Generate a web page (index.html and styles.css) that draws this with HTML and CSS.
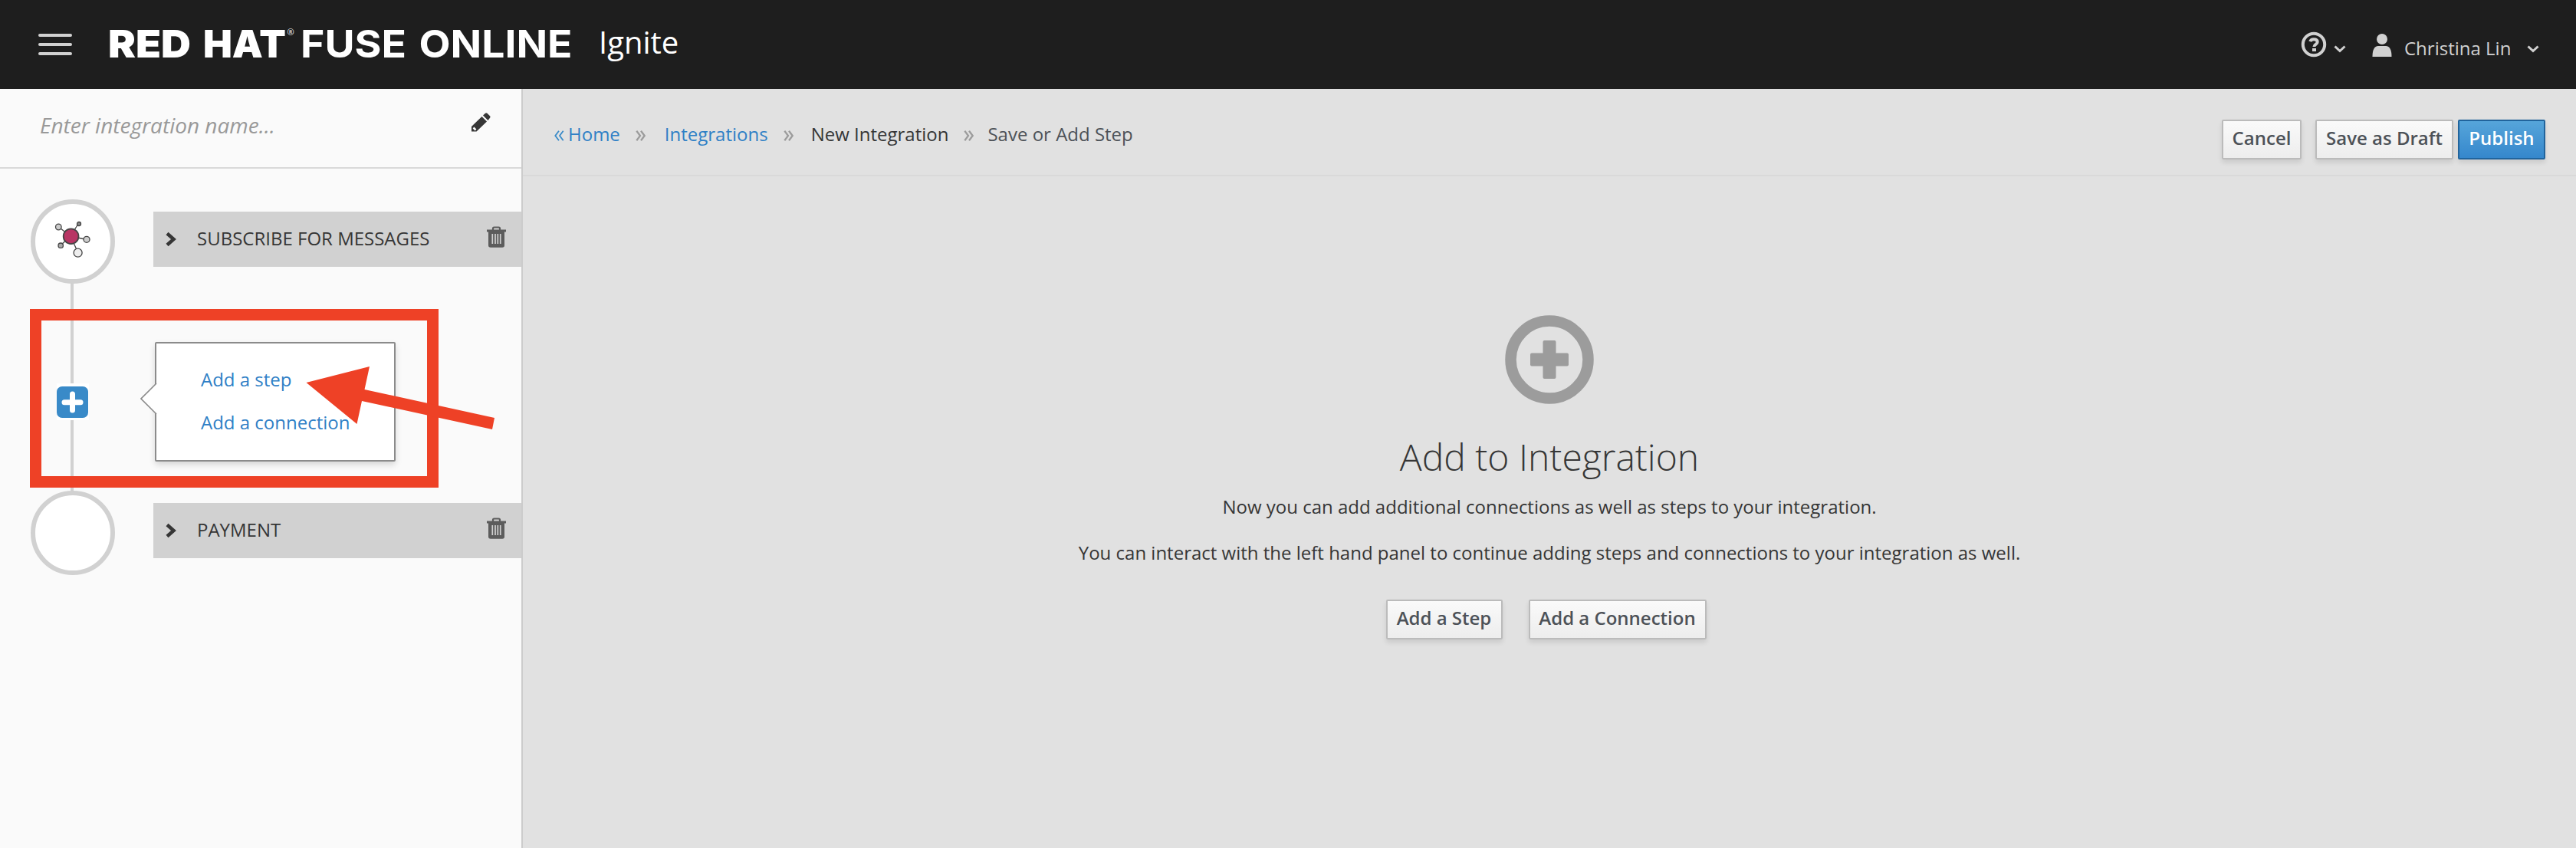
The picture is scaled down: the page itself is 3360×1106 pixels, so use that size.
FILE: index.html
```html
<!DOCTYPE html>
<html lang="en">
<head>
<meta charset="utf-8">
<title>Fuse Online - Ignite</title>
<link rel="stylesheet" href="styles.css">
</head>
<body>
<header class="masthead">
  <button class="menu" aria-label="Menu"><span></span><span></span><span></span></button>
  <svg class="brand" width="608" height="76" viewBox="0 -20 608 76">
    <text class="brand-red" x="-3" y="39" textLength="108" lengthAdjust="spacingAndGlyphs">RED</text>
    <text class="brand-red" x="121" y="39" textLength="108" lengthAdjust="spacingAndGlyphs">HAT</text>
    <text class="brand-reg" x="230.500" y="10">®</text>
    <text class="brand-fuse" x="248" y="39" textLength="138" lengthAdjust="spacingAndGlyphs">FUSE</text>
    <text class="brand-fuse" x="402.500" y="39" textLength="200" lengthAdjust="spacingAndGlyphs">ONLINE</text>
  </svg>
  <span class="app">Ignite</span>
  <nav class="utility">
    <svg class="help" width="34" height="34" viewBox="0 0 34 34"><circle cx="17" cy="17" r="14.2" fill="none" stroke="#d1d1d1" stroke-width="4"/><path d="M12.2 13.2c.8-2.300 2.500-3 4.800-3 3 0 4.700 1.500 4.700 3.500 0 3.300-4.300 3-4.300 6.200" fill="none" stroke="#d1d1d1" stroke-width="4"/><path d="M15 22h5v4h-5z" fill="#d1d1d1"/></svg>
    <svg class="caret c1" width="16" height="10" viewBox="0 0 16 10"><path d="M1.500 1.500 8 7.500l6.500-6" fill="none" stroke="#d1d1d1" stroke-width="3"/></svg>
    <svg class="user" width="26" height="32" viewBox="0 0 26 32"><circle cx="13" cy="8" r="7" fill="#d1d1d1"/><path d="M.5 31C.5 22 3 17 8 17h10c5 0 7.500 5 7.500 14z" fill="#d1d1d1"/></svg>
    <span class="username">Christina Lin</span>
    <svg class="caret c2" width="16" height="10" viewBox="0 0 16 10"><path d="M1.500 1.500 8 7.500l6.500-6" fill="none" stroke="#d1d1d1" stroke-width="3"/></svg>
  </nav>
</header>
<div class="page">
  <aside class="sidebar">
    <div class="name-row">
      <span class="name">Enter integration name...</span>
      <svg class="pencil" width="25" height="25" viewBox="0 0 25 25"><path d="M0 24.500V18L13.500 5l6.500 6.500L6.500 24.500z M15 3.500 18 .8q1.200-1 2.500 0L24 4.300q1 1.200 0 2.500L21.500 10z" fill="#363636"/><path d="M2.500 19.500 5.500 22.500" stroke="#fff" stroke-width="2.500"/></svg>
    </div>
    <div class="flow">
      <div class="step">
        <div class="node">
          <svg width="50" height="50" viewBox="0 0 50 50" stroke="#444" stroke-width="1.300"><path d="M8.500 8 24 20 34 4M24 20l21 4.500M24 20 11 32M24 20l10 22" fill="none"/><circle cx="8.300" cy="8" r="3.800" fill="#ccc"/><circle cx="35" cy="4" r="2.500" fill="#888"/><circle cx="45" cy="24.300" r="4" fill="#ccc"/><circle cx="11.200" cy="32.200" r="3.200" fill="#aaa"/><circle cx="33.600" cy="41.700" r="5.500" fill="#eee"/><circle cx="24.600" cy="20.200" r="9.900" fill="#b83564" stroke-width="1.800"/></svg>
        </div>
        <div class="bar">
          <svg class="chev" width="14" height="20" viewBox="0 0 14 20"><path d="m2 2.500 8.500 7.500L2 17.500" fill="none" stroke="#363636" stroke-width="4.500"/></svg>
          <span>SUBSCRIBE FOR MESSAGES</span>
          <svg class="trash" width="25" height="28" viewBox="0 0 25 28"><path d="M8 5V3q0-1.500 1.500-1.500h6Q17 1.500 17 3v2" fill="none" stroke="#5c5c5c" stroke-width="2.200"/><path d="M0 4.500h25v3h-2V25q0 2.800-2.800 2.800H5Q2 27.800 2 25V7.500H0z" fill="#5c5c5c"/><path d="M7.300 10v13M11 10v13M14.300 10v13M17.700 10v13" stroke="#d1d1d1" stroke-width="1.700"/></svg>
        </div>
      </div>
      <div class="insert">
        <span class="plus"><svg width="41" height="41" viewBox="0 0 41 41"><rect width="41" height="41" rx="7" fill="#398ac8"/><path d="M20.500 10v21M10 20.700h21" stroke="#fff" stroke-width="7" stroke-linecap="round"/></svg></span>
        <div class="popover">
          <svg class="tip" width="22" height="42" viewBox="0 0 22 42"><path d="M22 1H21L1 21l20 20h1z" fill="#fff"/><path d="M21 1 1 21l20 20" fill="none" stroke="#8b8b8b" stroke-width="1.600"/></svg>
          <a>Add a step</a>
          <a>Add a connection</a>
        </div>
      </div>
      <div class="step">
        <div class="node"></div>
        <div class="bar">
          <svg class="chev" width="14" height="20" viewBox="0 0 14 20"><path d="m2 2.500 8.500 7.500L2 17.500" fill="none" stroke="#363636" stroke-width="4.500"/></svg>
          <span>PAYMENT</span>
          <svg class="trash" width="25" height="28" viewBox="0 0 25 28"><path d="M8 5V3q0-1.500 1.500-1.500h6Q17 1.500 17 3v2" fill="none" stroke="#5c5c5c" stroke-width="2.200"/><path d="M0 4.500h25v3h-2V25q0 2.800-2.800 2.800H5Q2 27.800 2 25V7.500H0z" fill="#5c5c5c"/><path d="M7.300 10v13M11 10v13M14.300 10v13M17.700 10v13" stroke="#d1d1d1" stroke-width="1.700"/></svg>
        </div>
      </div>
    </div>
  </aside>
  <main class="main">
    <div class="toolbar">
      <nav class="crumbs">
        <a class="home"><svg width="13" height="14" viewBox="0 0 13 14"><path d="M6 .8 1.300 7 6 13.200M11.700.8 7 7l4.700 6.200" fill="none" stroke="#398ac8" stroke-width="1.800"/></svg>Home</a>
        <svg class="sep" width="13" height="14" viewBox="0 0 13 14"><path d="M1.300.8 6 7l-4.700 6.200M7 .8 11.700 7 7 13.200" fill="none" stroke="#9c9c9c" stroke-width="2.300"/></svg>
        <a class="list">Integrations</a>
        <svg class="sep" width="13" height="14" viewBox="0 0 13 14"><path d="M1.300.8 6 7l-4.700 6.200M7 .8 11.700 7 7 13.200" fill="none" stroke="#9c9c9c" stroke-width="2.300"/></svg>
        <span class="new">New Integration</span>
        <svg class="sep" width="13" height="14" viewBox="0 0 13 14"><path d="M1.300.8 6 7l-4.700 6.200M7 .8 11.700 7 7 13.200" fill="none" stroke="#9c9c9c" stroke-width="2.300"/></svg>
        <span class="current">Save or Add Step</span>
      </nav>
      <div class="actions">
        <button class="btn cancel">Cancel</button>
        <button class="btn draft">Save as Draft</button>
        <button class="btn primary">Publish</button>
      </div>
    </div>
    <section class="blank">
      <svg width="116" height="116" viewBox="0 0 116 116"><circle cx="58" cy="58" r="50.500" fill="none" stroke="#9c9c9c" stroke-width="14.500"/><rect x="33" y="49.500" width="50" height="17" rx="2" fill="#9c9c9c"/><rect x="49.500" y="33" width="17" height="50" rx="2" fill="#9c9c9c"/></svg>
      <h1>Add to Integration</h1>
      <p>Now you can add additional connections as well as steps to your integration.</p>
      <p>You can interact with the left hand panel to continue adding steps and connections to your integration as well.</p>
      <div class="choices">
        <button class="btn add-step">Add a Step</button>
        <button class="btn add-conn">Add a Connection</button>
      </div>
    </section>
  </main>
</div>
<svg class="callout" width="620" height="240" viewBox="38 400 620 240"><rect x="46.500" y="410.500" width="518" height="218" fill="none" stroke="#ee4126" stroke-width="15"/><path d="m399.500 499 82.500-21-6.500 30 169.500 37-3 15-170-37-6.500 30z" fill="#ee4126"/></svg>
</body>
</html>
```
FILE: styles.css
```css
* { box-sizing: border-box; }
body { margin: 0; width: 3360px; height: 1106px; overflow: hidden; position: relative; font-family: "Open Sans", sans-serif; font-size: 24px; color: #363636; background: #e1e1e1; white-space: nowrap; }
button { font-family: inherit; padding: 0; border: 0; background: none; }
svg { display: block; flex: none; }
.masthead { height: 116px; background: #1e1e1e; display: flex; align-items: flex-start; padding-left: 50px; }
.menu { display: flex; flex-direction: column; gap: 8px; width: 44px; margin-top: 44px; }
.menu span { height: 4px; border-radius: 2px; background: #d1d1d1; }
.brand { margin: 16px 0 0 50px; fill: #fff; overflow: visible; }
.brand-red { font: 900 49.5px Inter, sans-serif; }
.brand-fuse { font: 700 50px Inter, sans-serif; }
.brand-reg { font: 11px "Open Sans", sans-serif; }
.app { margin-left: 29px; margin-top: 28px; line-height: 54px; font-size: 40px; color: #fff; }
.utility { display: flex; align-items: flex-start; margin-left: auto; width: 359px; color: #d1d1d1; }
.help { margin-top: 41px; }
.c1 { margin: 59px 0 0 9px; }
.user { margin: 43px 0 0 34px; }
.username { margin: 46px 0 0 16px; width: 160px; line-height: 34px; }
.c2 { margin: 59px 0 0 0; }
.page { display: flex; height: 990px; }
.sidebar { width: 682px; border-right: 2px solid #ccc; background: #fafafa; }
.name-row { height: 104px; border-bottom: 2px solid #d9d9d9; display: flex; justify-content: space-between; padding: 31px 40px 0 52px; }
.name { font-style: italic; font-size: 28px; line-height: 32px; color: #999; }
.flow { padding-top: 40px; background: linear-gradient(#d1d1d1, #d1d1d1) 92px 140px / 4px 300px no-repeat; }
.step { height: 110px; display: flex; padding-left: 40px; }
.node { width: 110px; height: 110px; border: 6px solid #d1d1d1; border-radius: 50%; background: #fff; padding: 22px 0 0 22px; }
.bar { margin: 16px 0 0 50px; width: 480px; height: 72px; background: #d1d1d1; display: flex; align-items: center; padding: 0 20px 0 16px; }
.bar span { margin: 0 0 2px 27px; flex: 1; line-height: 34px; }
.bar .trash { margin-bottom: 7px; }
.insert { height: 270px; display: flex; align-items: flex-start; }
.plus { margin: 130px 0 0 74px; width: 42px; height: 48px; padding-top: 4px; background: #fff; }
.popover { position: relative; margin: 76px 0 0 86px; width: 314px; height: 156px; border: 2px solid #8b8b8b; border-radius: 2px; background: #fff; box-shadow: 0 4px 8px rgba(3,3,3,.15); padding: 30px 0 0 58px; display: flex; flex-direction: column; gap: 22px; }
.popover a { line-height: 34px; color: #2f80c6; }
.tip { position: absolute; left: -21px; top: 51px; }
.main { flex: 1; }
.toolbar { height: 114px; border-bottom: 2px solid #d9d9d9; display: flex; justify-content: space-between; padding: 40px 40px 0 41px; }
.crumbs { display: flex; height: 38px; line-height: 38px; }
.crumbs a { color: #2f80c6; }
.crumbs svg { margin-top: 13.5px; }
.crumbs .sep { margin-left: 20px; }
.home { display: flex; gap: 5px; }
.list { margin-left: 25px; }
.new { margin-left: 23px; }
.current { margin-left: 18px; color: #4d5258; }
.actions { display: flex; }
.btn { height: 52px; border: 2px solid #bbb; border-radius: 2px; background: linear-gradient(#fafafa, #ededed); box-shadow: 0 4px 6px rgba(3,3,3,.1); font-size: 24px; font-weight: 600; color: #4d5258; line-height: 42px; padding-bottom: 4px; text-align: center; }
.cancel { width: 104px; margin-right: 18px; }
.draft { width: 180px; margin-right: 6px; }
.primary { width: 114px; border-color: #21649c; background: linear-gradient(#56a5da, #3587cc); color: #fff; }
.blank { display: flex; flex-direction: column; align-items: center; padding-top: 181px; }
.blank h1 { margin: 41px 0 0; font-size: 48px; line-height: 56px; font-weight: 300; }
.blank p { margin: 14px 0 0; line-height: 46px; }
.choices { display: flex; gap: 34px; margin: 38px 9px 0 0; }
.add-step { width: 152px; }
.add-conn { width: 232px; }
.callout { position: absolute; left: 38px; top: 400px; }
```
